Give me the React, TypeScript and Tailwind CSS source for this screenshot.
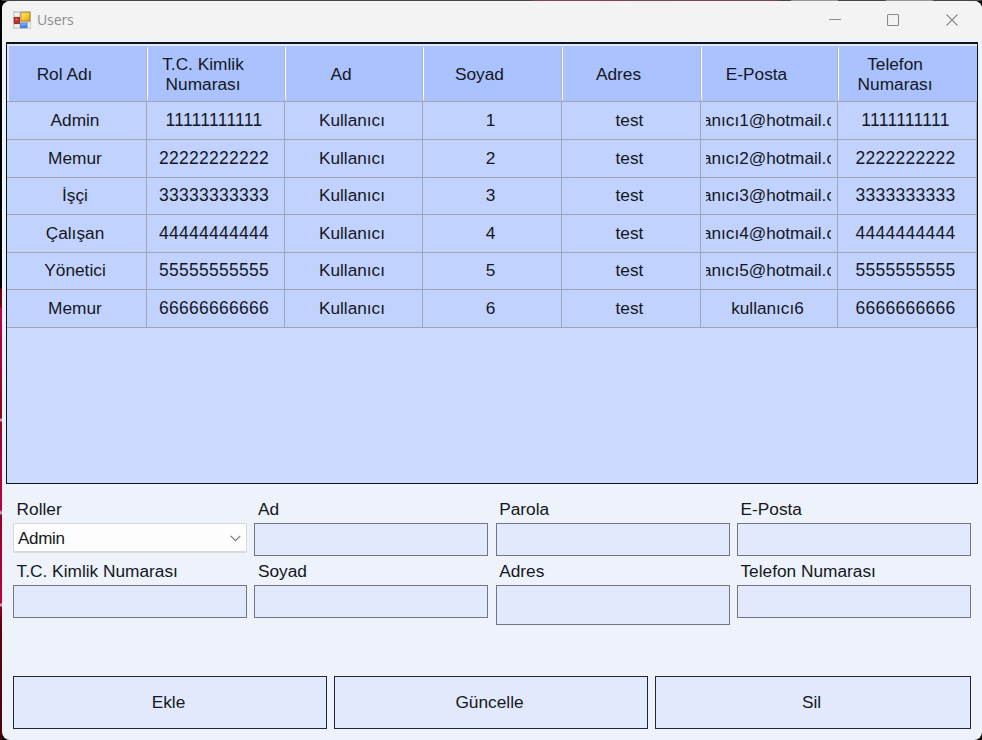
import React from "react";

type Column = { lines: string[]; width: string; text?: string };

const columns: Column[] = [
  { lines: ["Rol Adı"], width: "w-[140px]" },
  { lines: ["T.C. Kimlik", "Numarası"], width: "w-[138px]", text: "text-[17.5px] tracking-[0.27px]" },
  { lines: ["Ad"], width: "w-[138px]", text: "text-[17.2px]" },
  { lines: ["Soyad"], width: "w-[139px]" },
  { lines: ["Adres"], width: "w-[139px]" },
  { lines: ["E-Posta"], width: "w-[137px]", text: "text-[17.2px]" },
  { lines: ["Telefon", "Numarası"], width: "w-[139px]", text: "text-[17.5px] tracking-[0.27px]" },
];

const rows: { height: string; cells: string[] }[] = [
  { height: "h-[38px]", cells: ["Admin", "11111111111", "Kullanıcı", "1", "test", "kullanıcı1@hotmail.com", "1111111111"] },
  { height: "h-[38px]", cells: ["Memur", "22222222222", "Kullanıcı", "2", "test", "kullanıcı2@hotmail.com", "2222222222"] },
  { height: "h-[37px]", cells: ["İşçi", "33333333333", "Kullanıcı", "3", "test", "kullanıcı3@hotmail.com", "3333333333"] },
  { height: "h-[38px]", cells: ["Çalışan", "44444444444", "Kullanıcı", "4", "test", "kullanıcı4@hotmail.com", "4444444444"] },
  { height: "h-[37px]", cells: ["Yönetici", "55555555555", "Kullanıcı", "5", "test", "kullanıcı5@hotmail.com", "5555555555"] },
  { height: "h-[38px]", cells: ["Memur", "66666666666", "Kullanıcı", "6", "test", "kullanıcı6", "6666666666"] },
];

function AppIcon() {
  return (
    <svg width="18" height="18" viewBox="0 0 18 18" className="block">
      <defs>
        <linearGradient id="gold" x1="0" y1="0" x2="1" y2="1">
          <stop offset="0" stopColor="#ffe98a" />
          <stop offset="0.5" stopColor="#fbc93a" />
          <stop offset="1" stopColor="#dc9a0c" />
        </linearGradient>
        <linearGradient id="blue" x1="0" y1="0" x2="0" y2="1">
          <stop offset="0" stopColor="#8dbcfa" />
          <stop offset="1" stopColor="#2c6fe0" />
        </linearGradient>
      </defs>
      <rect width="18" height="18" fill="#d0d0d0" />
      <rect x="1.5" y="2" width="4.5" height="3.5" fill="#f2f2f2" />
      <rect x="1.5" y="13.5" width="4.5" height="3" fill="#f2f2f2" />
      <rect x="15" y="12" width="2" height="4.5" fill="#f2f2f2" />
      <rect x="1.2" y="6.5" width="5.2" height="6" fill="#c22f2b" stroke="#8d1f1d" strokeWidth="0.8" />
      <rect x="2.4" y="7.6" width="2" height="1.8" fill="#e2746c" />
      <rect x="8" y="1.2" width="9" height="8.8" fill="url(#gold)" stroke="#a9790f" strokeWidth="0.8" />
      <rect x="7.6" y="12" width="6.4" height="4.8" fill="url(#blue)" stroke="#3f78d2" strokeWidth="0.7" />
    </svg>
  );
}

function TitleBar() {
  return (
    <div className="flex h-[39px] items-center bg-[#f3f3f3] pb-px pl-[11px]">
      <AppIcon />
      <span className="ml-[6px] flex-1 font-['Open_Sans','Noto_Sans',sans-serif] text-[14px] leading-[20px] tracking-[-0.1px] text-[#8c8c8c]">
        Users
      </span>
      <svg width="154" height="38" viewBox="0 0 154 38" fill="none" stroke="#8b8b8b" strokeWidth="1.1">
        <path d="M1 18.5h12" />
        <rect x="59.5" y="13.5" width="11" height="11" rx="1" />
        <path d="M118.5 13.5l11 11M129.5 13.5l-11 11" />
      </svg>
    </div>
  );
}

function DataGrid() {
  return (
    <div className="ml-1 mt-[2px] h-[442px] w-[972px] border border-t-2 border-[#10131c] bg-[#ccdafd]">
      <div className="flex h-[57px] border-t-2 border-[#e3e9f2] bg-[#aac2ff]">
        {columns.map((column, i) => (
          <div key={i} className={`${column.width} flex h-full shrink-0 items-start`}>
            <div className={`${i === 0 ? "h-full w-[2px] bg-[#dfe5f0]" : "mt-px h-[53px] w-px bg-[#f8f9fa]"}`} />
            <div className="flex h-full flex-1 flex-col items-center justify-center pr-[26px] pt-px text-center leading-[20px]">
              {column.lines.map((line) => (
                <span key={line}>{line}</span>
              ))}
            </div>
            {i < 6 && <div className="mt-px h-[53px] w-px bg-[#b0b3ba]" />}
          </div>
        ))}
      </div>
      <div className="border-t border-[#a2a6b0]">
        {rows.map((row, r) => (
          <div key={r} className={`${row.height} flex border-b border-[#a2a6b0] bg-[#c1d2ff]`}>
            {row.cells.map((cell, i) => (
              <div
                key={i}
                className={`${columns[i].width} flex shrink-0 items-center border-r border-[#a2a6b0] pb-[2px] pl-[5px] pr-[6px]`}
              >
                <div
                  className={`${columns[i].text ?? ""} flex flex-1 justify-center overflow-hidden whitespace-nowrap pr-[2px] leading-[22px]`}
                >
                  {cell}
                </div>
              </div>
            ))}
          </div>
        ))}
      </div>
    </div>
  );
}

type FieldProps = { label: string; tall?: boolean; select?: boolean };

function Field({ label, tall, select }: FieldProps) {
  return (
    <label className="block">
      <span className="block h-[24px] pl-[3.6px] leading-[20px]">{label}</span>
      {select ? (
        <span className="flex h-[30px] items-center justify-between rounded-[2px] border border-b-2 border-[#d6d9de] bg-[#fdfdfd] pl-1 pr-[5px] pt-[2px] text-[17px] tracking-[-0.3px]">
          Admin
          <svg width="11" height="7" viewBox="0 0 11 7" fill="none" stroke="#777" strokeWidth="1.2">
            <path d="M0.7 0.8l4.8 4.8 4.8-4.8" />
          </svg>
        </span>
      ) : (
        <span
          className={`${tall ? "h-[40px]" : "h-[33px]"} block border border-[#73767e] bg-[#e2e9fc]`}
        />
      )}
    </label>
  );
}

export default function App() {
  return (
    <div className="flex h-[740px] w-[982px] overflow-hidden bg-black font-['Liberation_Sans',Arial,sans-serif] text-[17.3px] text-[#151720]">
      <div className="w-[2px] shrink-0 bg-[linear-gradient(to_bottom,#000_0_288px,#6e0010_289px_307px,#c4004b_308px,#b30039_350px,#8e001d_418px,#c5a0aa_419px_421px,#a0002c_422px,#bd0043_510px,#c5a0aa_512px_514px,#98001f_515px,#bd0043_603px,#c5a0aa_604px_606px,#90001a_607px,#62000d_625px,#4b0008_740px)]" />
      <div className="flex w-[980px] flex-col">
        <div className="h-px shrink-0 bg-[linear-gradient(to_right,#444_0_528px,#87405b_530px,#79434f_775px,#444_778px_788px,#999_790px_835px,#444_837px_883px,#999_885px_930px,#444_932px)]" />
        <div className="h-[739px] overflow-hidden rounded-[8px] bg-[#edf2fb]">
          <TitleBar />
          <DataGrid />
          <div className="ml-[11px] mt-[15px] grid w-[958px] grid-cols-[234px_234px_234px_234px] gap-x-[7.3px]">
            <div className="h-[62px]"><Field label="Roller" select /></div>
            <Field label="Ad" />
            <Field label="Parola" />
            <Field label="E-Posta" />
            <div className="h-[115px]"><Field label="T.C. Kimlik Numarası" /></div>
            <Field label="Soyad" />
            <Field label="Adres" tall />
            <Field label="Telefon Numarası" />
          </div>
          <div className="ml-[11px] flex gap-[7px]">
            {["Ekle", "Güncelle", "Sil"].map((label, i) => (
              <button
                key={label}
                className={`${i === 2 ? "w-[316px]" : "w-[314px]"} h-[53px] border border-[#23262e] bg-[#e2e9fc] pr-[3px]`}
              >
                {label}
              </button>
            ))}
          </div>
        </div>
      </div>
    </div>
  );
}
